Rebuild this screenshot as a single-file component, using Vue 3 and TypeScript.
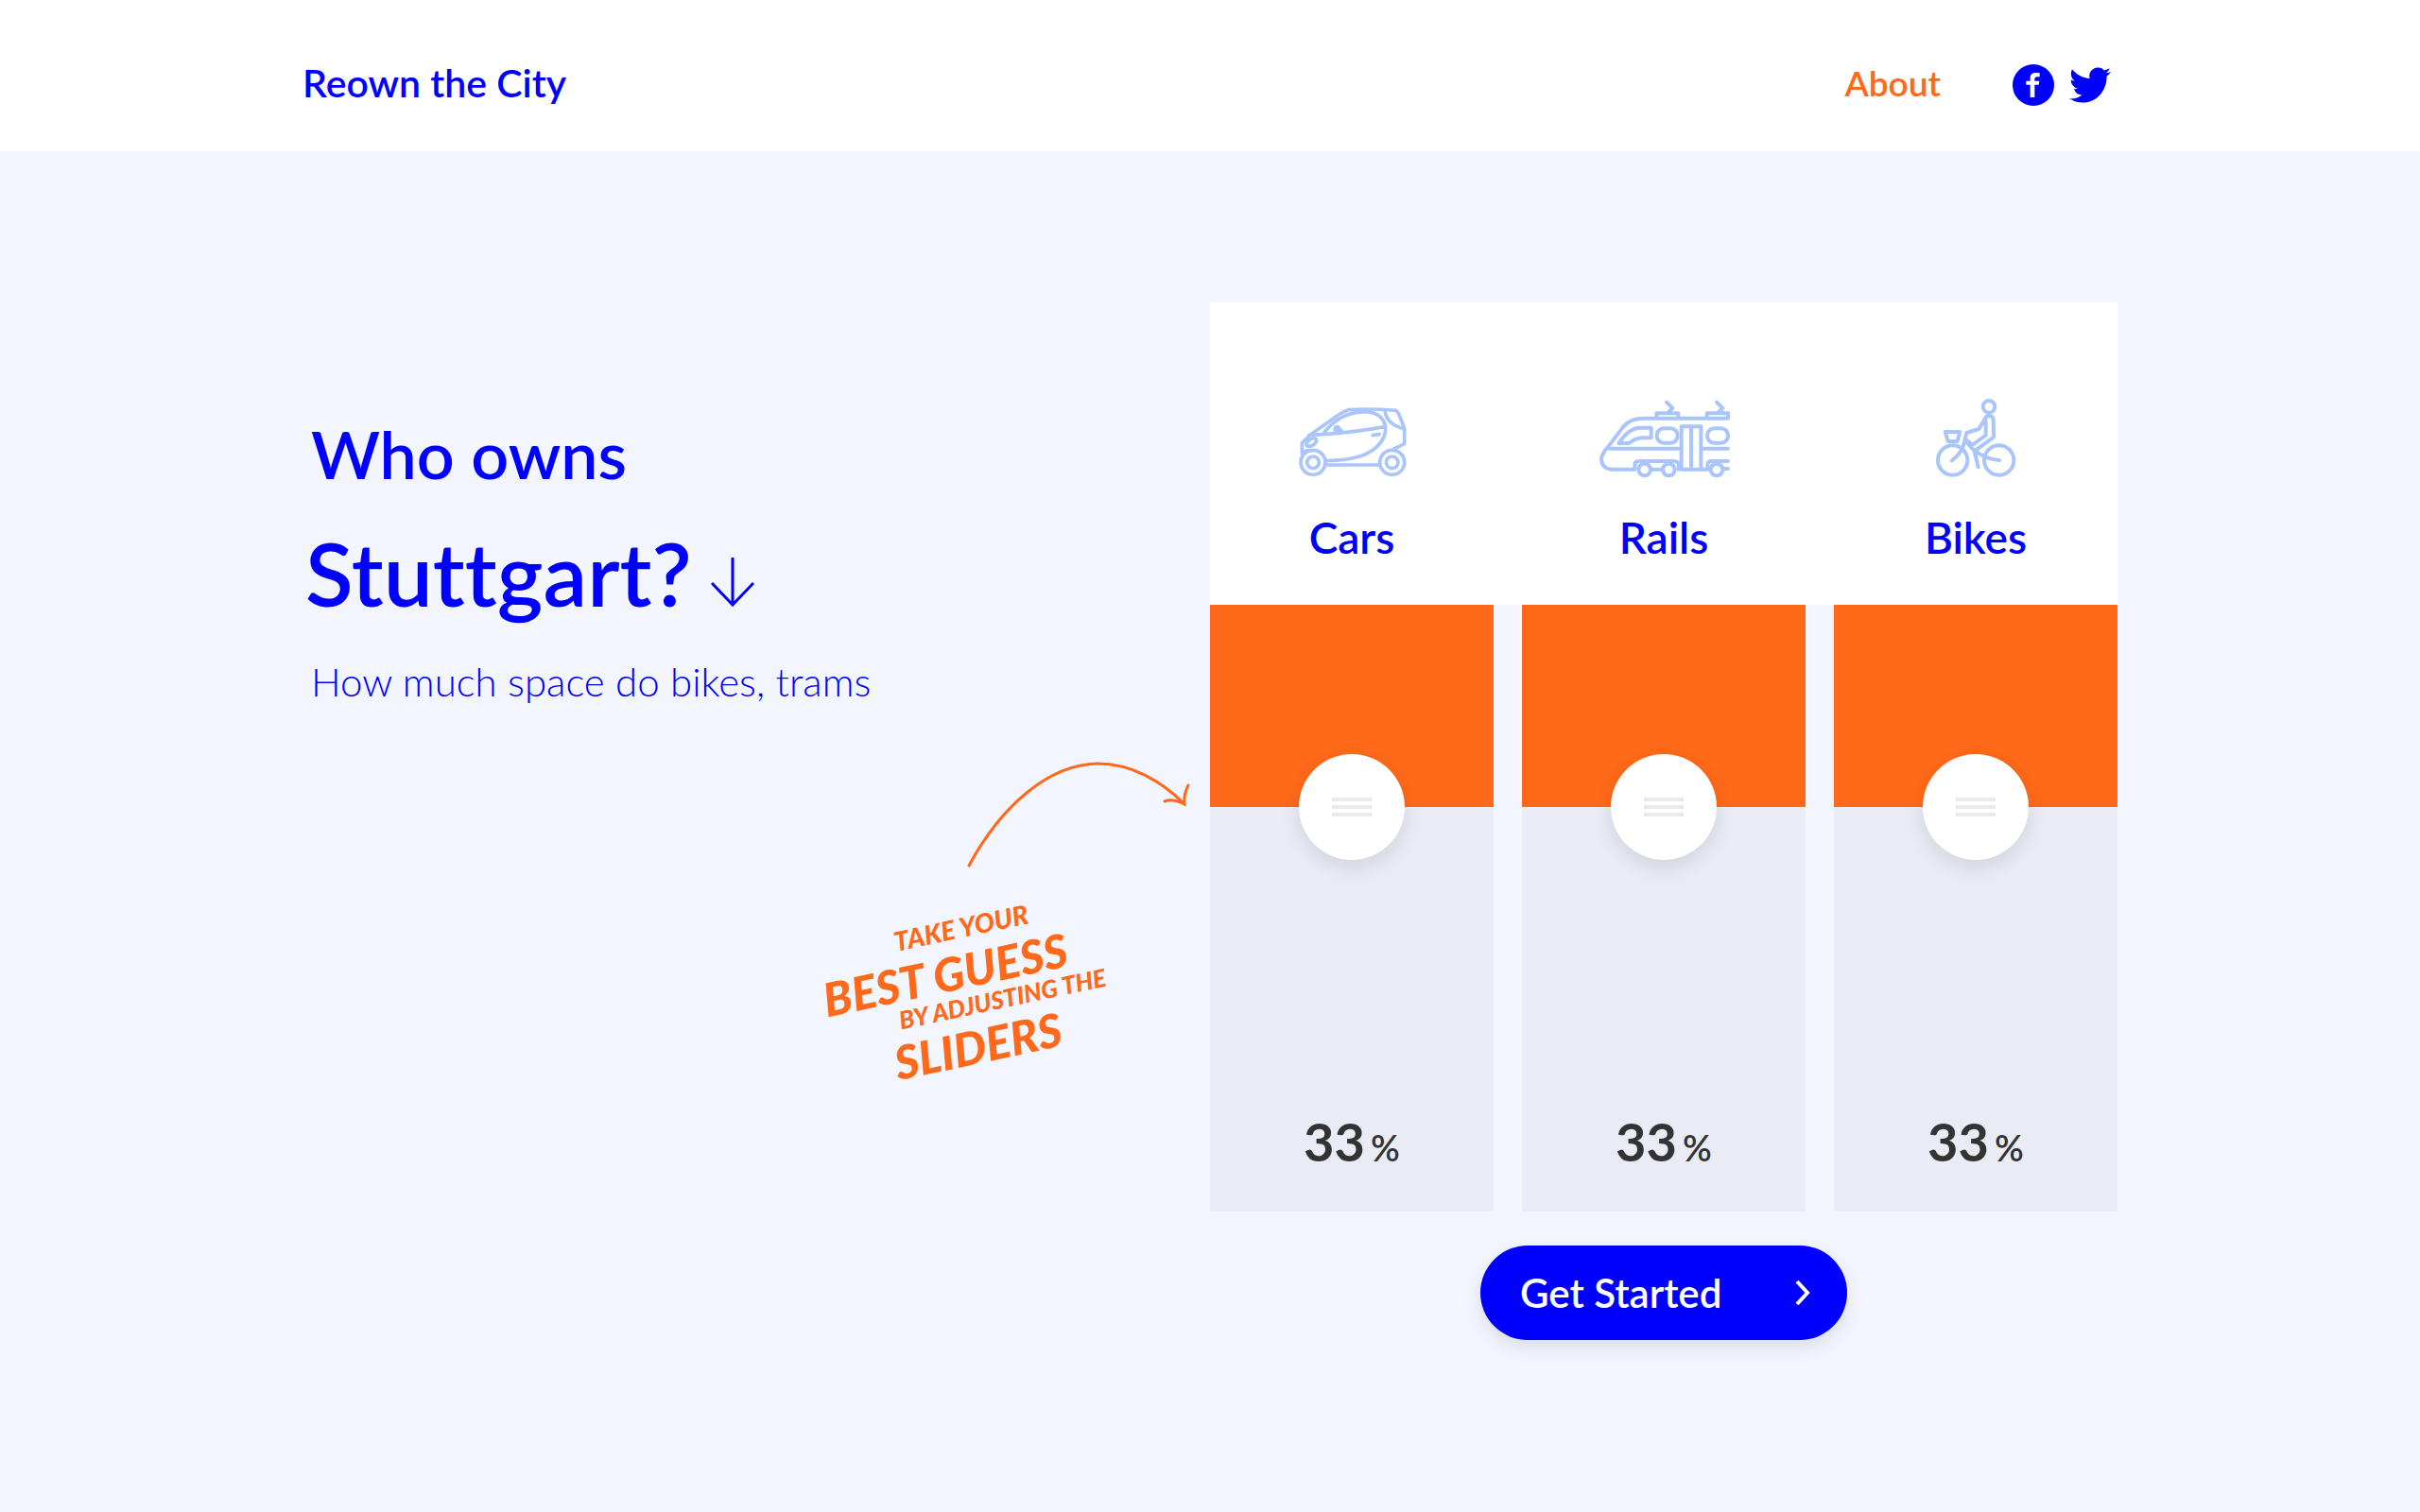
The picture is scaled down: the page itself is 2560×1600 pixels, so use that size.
<script setup lang="ts">
import { reactive } from 'vue'

type Mode = { id: 'cars' | 'rails' | 'bikes'; label: string; share: number }

const modes = reactive<Mode[]>([
  { id: 'cars', label: 'Cars', share: 33.3 },
  { id: 'rails', label: 'Rails', share: 33.3 },
  { id: 'bikes', label: 'Bikes', share: 33.3 },
])
</script>

<template>
  <div class="page">
    <header class="bar">
      <div class="wrap bar-inner">
        <a class="brand" href="#">Reown the City</a>
        <nav class="nav">
          <a class="about" href="#about">About</a>
          <a class="social" href="#facebook" aria-label="Facebook">
            <svg viewBox="0 0 132 132" width="44" height="44">
              <circle cx="66" cy="66" r="66" fill="#00f" />
              <path
                fill="#fff"
                d="M56 105V65H43V53h13V43c0-11 7-16 17-16 5 0 9 0 13 1v12h-8c-6 0-8 3-8 7v6h15l-2 12H70v40z"
              />
            </svg>
          </a>
          <a class="social" href="#twitter" aria-label="Twitter">
            <svg viewBox="0 2 24 20" width="44" height="38" preserveAspectRatio="none">
              <path
                fill="#00f"
                d="M23.953 4.57a10 10 0 01-2.825.775 4.958 4.958 0 002.163-2.723c-.951.555-2.005.959-3.127 1.184a4.92 4.92 0 00-8.384 4.482C7.69 8.095 4.067 6.13 1.64 3.162a4.822 4.822 0 00-.666 2.475c0 1.71.87 3.213 2.188 4.096a4.904 4.904 0 01-2.228-.616v.06a4.923 4.923 0 003.946 4.827 4.996 4.996 0 01-2.212.085 4.936 4.936 0 004.604 3.417 9.867 9.867 0 01-6.102 2.105c-.39 0-.779-.023-1.17-.067a13.995 13.995 0 007.557 2.209c9.053 0 13.998-7.496 13.998-13.985 0-.21 0-.42-.015-.63A9.935 9.935 0 0024 4.59z"
              />
            </svg>
          </a>
        </nav>
      </div>
    </header>

    <main class="wrap hero">
      <section class="intro">
        <h1>
          <span class="who">Who owns</span>
          <span class="city">
            Stuttgart?
            <svg class="down" viewBox="0 0 46 52" width="46" height="52" aria-hidden="true">
              <path d="M23 0V49M1 27L23 50L45 27" fill="none" stroke="#00f" stroke-width="3" />
            </svg>
          </span>
        </h1>
        <p class="lead">How much space do bikes, trams</p>

        <svg class="hint" viewBox="860 790 410 390" width="410" height="390">
          <g fill="none" stroke="#ff6919" stroke-width="3" stroke-linecap="round">
            <path d="M1025 916C1059 853 1109 809 1161 808C1197 808 1229 827 1252 850" />
            <path d="M1232 848C1239 845 1247 848 1253 851C1252 844 1254 837 1257 831" />
          </g>
          <g class="hint-text" transform="rotate(-12)">
            <text x="718" y="1182" class="mid">TAKE YOUR</text>
            <text x="632" y="1235" class="big">BEST GUESS</text>
            <text x="706" y="1264" class="small">BY ADJUSTING THE</text>
            <text x="692" y="1316" class="big">SLIDERS</text>
          </g>
        </svg>
      </section>

      <section class="guess">
        <div class="heads">
          <div v-for="m in modes" :key="m.id" class="head">
            <svg v-if="m.id === 'cars'" class="icon car" viewBox="0 0 480 360" width="160" height="120">
              <circle cx="117" cy="268" r="39" />
              <circle cx="117" cy="268" r="19" />
              <circle cx="368" cy="268" r="39" />
              <circle cx="368" cy="268" r="19" />
              <path d="M82 240V206L112 178L190 122Q215 105 230 101Q300 96 380 103L388 111L407 160V209L372 226M160 276H328" />
              <path d="M104 182L160 178Q250 172 345 155M150 176C178 140 215 109 282 107C325 108 348 132 347 165C344 205 308 236 262 250C228 260 198 262 162 263" />
              <path d="M345 105Q352 148 405 161M306 182L328 178M84 240Q92 228 110 230" />
              <ellipse cx="112" cy="204" rx="18" ry="10" transform="rotate(-32 112 204)" />
              <path class="solid" d="M183 168C181 152 192 148 200 154L214 170Z" />
            </svg>
            <svg v-else-if="m.id === 'rails'" class="icon" viewBox="0 0 540 360" width="180" height="120">
              <path d="M474 128H205Q165 128 142 154L92 220Q72 242 72 260Q76 290 108 290H178V277Q178 264 191 264H303Q318 264 318 280V290" />
              <path d="M98 224H326M390 224H474M326 154H388V290H326ZM357 154V290" />
              <rect x="248" y="160" width="66" height="46" rx="22" />
              <rect x="408" y="160" width="66" height="46" rx="22" />
              <path d="M127 207Q160 158 194 158H230V190H205Q180 190 160 207Z" />
              <path d="M247 126V112H316V126M407 126V112H474V126M279 77L298 96L283 110M438 77L457 96L442 110" />
              <circle cx="209" cy="291" r="19" />
              <circle cx="286" cy="291" r="19" />
              <circle cx="438" cy="291" r="19" />
              <path d="M230 290H265M390 290H409V277Q409 264 421 264H474M460 288H474" />
            </svg>
            <svg v-else class="icon" viewBox="0 0 420 360" width="140" height="120">
              <circle cx="137" cy="261" r="47" />
              <circle cx="284" cy="261" r="47" />
              <circle cx="252" cy="91" r="19" />
              <path d="M113 171H160L152 201H122Z" />
              <path d="M238 132Q242 120 252 120Q266 120 266 134L267 188L206 232L218 283M238 132L220 162L181 174L176 194L200 212L242 182V136" />
              <path d="M134 262Q168 238 176 196M178 198Q214 254 285 261" />
            </svg>
            <h2>{{ m.label }}</h2>
          </div>
        </div>

        <div class="tracks">
          <div v-for="m in modes" :key="m.id" class="track">
            <div class="fill" :style="{ height: m.share + '%' }"></div>
            <output class="value" :for="m.id">
              <span class="num">{{ Math.round(m.share) }}</span><span class="pct">%</span>
            </output>
            <input
              :id="m.id"
              v-model.number="m.share"
              class="slider"
              type="range"
              min="0"
              max="100"
              step="0.1"
              :aria-label="m.label"
            />
          </div>
        </div>

        <button class="start" type="button">
          Get Started
          <svg viewBox="0 0 16 28" width="16" height="28" aria-hidden="true">
            <path d="M2 2L13 14L2 26" fill="none" stroke="#fff" stroke-width="4" />
          </svg>
        </button>
      </section>
    </main>
  </div>
</template>

<style>
body {
  margin: 0;
  background: #f3f6ff;
}
</style>

<style scoped>
.page {
  min-height: 100vh;
  background: #f3f6ff;
  color: #00f;
  font-family: Lato, 'Liberation Sans', sans-serif;
  font-variant-ligatures: none;
}
.wrap {
  width: 75%;
  margin: 0 auto;
}
.bar {
  background: #fff;
}
.bar-inner {
  display: flex;
  align-items: center;
  justify-content: space-between;
  height: 160px;
  padding: 20px 7px 0 0;
  box-sizing: border-box;
}
.brand,
.about {
  text-decoration: none;
  font-weight: 600;
  line-height: 52px;
}
.brand {
  padding-bottom: 4px;
  color: #00f;
  font-size: 41px;
}
.about {
  padding-bottom: 4px;
  margin-right: 60px;
  color: #ff6919;
  font-size: 37px;
}
.nav {
  display: flex;
  align-items: center;
  gap: 16px;
}
.social,
.social svg {
  display: block;
}
.hero {
  display: grid;
  grid-template-columns: 1fr 1fr;
  padding: 160px 0;
}
.intro {
  display: flex;
  flex-direction: column;
  padding-top: 118px;
}
h1,
h2,
p {
  margin: 0;
}
h1 {
  display: flex;
  flex-direction: column;
  gap: 28px;
  font-weight: 600;
}
.who {
  padding-left: 9px;
  font-size: 70px;
  line-height: 84px;
}
.city {
  display: flex;
  align-items: flex-end;
  gap: 20px;
  padding-left: 3px;
  font-size: 93px;
  line-height: 112px;
}
.down {
  margin-bottom: 20px;
}
.lead {
  padding-left: 9px;
  margin-top: 34px;
  font-size: 42px;
  font-weight: 300;
  line-height: 50px;
}
.hint {
  align-self: flex-end;
  margin: 44px 10px 0 0;
  overflow: visible;
}
.hint-text {
  fill: #ff6919;
  font-weight: 900;
  font-style: italic;
}
.mid {
  font-size: 28px;
}
.big {
  font-size: 49px;
}
.small {
  font-size: 26px;
}
.guess {
  display: flex;
  flex-direction: column;
  align-items: stretch;
}
.heads,
.tracks {
  display: grid;
  grid-template-columns: repeat(3, 1fr);
  column-gap: 30px;
}
.heads {
  height: 320px;
  padding-top: 80px;
  box-sizing: border-box;
  background: #fff;
}
.head {
  display: flex;
  flex-direction: column;
  align-items: center;
}
.icon {
  fill: none;
  stroke: #a9c5fc;
  stroke-width: 12;
  stroke-linecap: round;
  stroke-linejoin: round;
}
.car {
  stroke-width: 11;
}
.solid {
  fill: #a9c5fc;
  stroke-width: 4;
}
h2 {
  margin-top: 21px;
  font-size: 46px;
  font-weight: 600;
  line-height: 56px;
}
.track {
  position: relative;
  display: flex;
  flex-direction: column;
  justify-content: space-between;
  height: 642px;
  background: #e9ecf5;
}
.fill {
  background: #ff6919;
}
.value {
  display: flex;
  align-items: baseline;
  justify-content: center;
  gap: 6px;
  padding-bottom: 42px;
  color: #333;
}
.num {
  font-size: 56px;
  font-weight: 700;
  line-height: 64px;
}
.pct {
  font-size: 38px;
  font-weight: 600;
}
.slider {
  position: absolute;
  top: -56px;
  left: 0;
  width: 100%;
  height: calc(100% + 112px);
  margin: 0;
  appearance: none;
  background: none;
  writing-mode: vertical-lr;
  cursor: grab;
}
.slider::-webkit-slider-thumb {
  appearance: none;
  width: 112px;
  height: 112px;
  border: 0;
  border-radius: 50%;
  background:
    linear-gradient(#eaeaea, #eaeaea) 50% 46px / 42px 4px no-repeat,
    linear-gradient(#eaeaea, #eaeaea) 50% 54px / 42px 4px no-repeat,
    linear-gradient(#eaeaea, #eaeaea) 50% 62px / 42px 4px no-repeat,
    #fff;
  box-shadow: 0 8px 20px rgba(0, 0, 0, 0.1);
}
.start {
  display: flex;
  align-items: center;
  justify-content: space-between;
  align-self: center;
  width: 388px;
  height: 100px;
  margin-top: 36px;
  padding: 0 39px 0 42px;
  border: 0;
  border-radius: 50px;
  background: #00f;
  color: #fff;
  font-family: inherit;
  font-size: 42px;
  font-weight: 600;
  box-shadow: 0 8px 20px rgba(0, 0, 0, 0.1);
  cursor: pointer;
}
</style>
